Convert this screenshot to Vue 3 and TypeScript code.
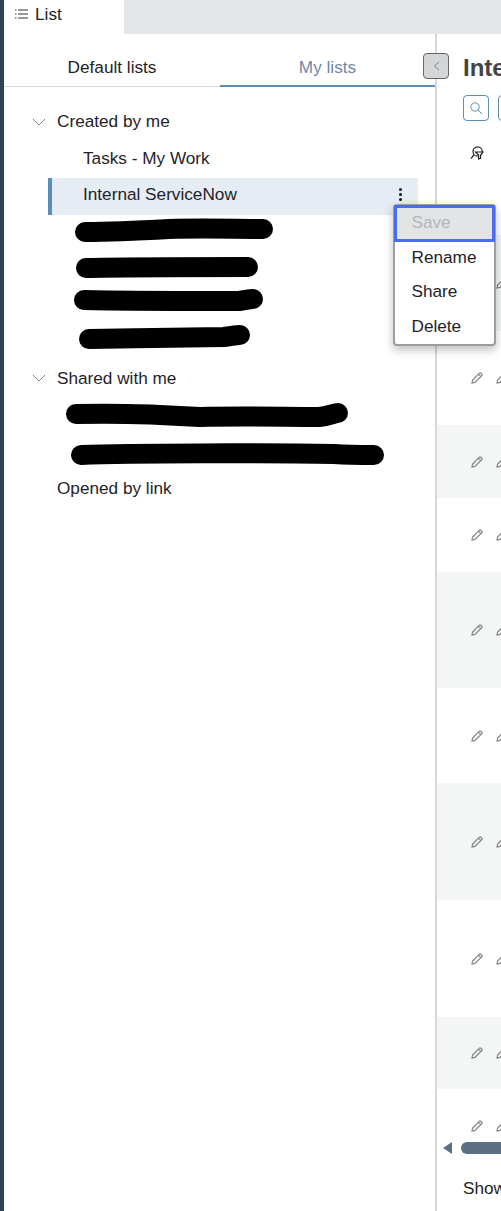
<template>
  <div class="page">
    <div class="rail"></div>
    <div class="main">
      <div class="tabbar">
        <div class="tab">
          <svg class="tab-icon" width="14" height="10" viewBox="0 0 14 10">
            <path d="M0 1h1.5M0 5h1.5M0 9h1.5M3 1h10M3 5h10M3 9h10" stroke="#333" stroke-width="1" fill="none" />
          </svg>
          <span>List</span>
        </div>
      </div>
      <div class="body">
        <aside class="side">
          <div class="switch">
            <div class="switch-item">Default lists</div>
            <div class="switch-item active">My lists</div>
          </div>
          <div class="tree">
            <div class="group">
              <svg class="chev" width="14" height="8" viewBox="0 0 14 8"><path d="M1 1l6 6 6-6" /></svg>
              <span class="nudge">Created by me</span>
            </div>
            <div class="item">Tasks - My Work</div>
            <div class="item selected">
              <span>Internal ServiceNow</span>
              <span class="dots"><i></i><i></i><i></i></span>
            </div>
            <!-- hand-drawn redaction strokes, y is relative to each block -->
            <svg class="scribbles" width="400" height="146" viewBox="0 0 400 146">
              <path v-for="d in createdScribbles" :key="d" :d="d" />
            </svg>
            <div class="group">
              <svg class="chev" width="14" height="8" viewBox="0 0 14 8"><path d="M1 1l6 6 6-6" /></svg>
              <span>Shared with me</span>
            </div>
            <svg class="scribbles" width="400" height="76" viewBox="0 0 400 76">
              <path v-for="d in sharedScribbles" :key="d" :d="d" />
            </svg>
            <div class="group link">Opened by link</div>
          </div>
        </aside>
        <section class="content">
          <h1>Internal ServiceNow</h1>
          <div class="tools">
            <button class="tool">
              <svg width="14" height="14" viewBox="0 0 14 14" fill="none" stroke="#5b8db8" stroke-width="1"><circle cx="6" cy="6" r="4.2" /><path d="M9 9l4 4" /></svg>
            </button>
            <button class="tool"></button>
          </div>
          <div class="head-icon">
            <svg width="14" height="14" viewBox="0 0 14 14" fill="none" stroke="#222" stroke-width="1.2"><circle cx="7.6" cy="5.4" r="4.6" /><path d="M4 8.6L1 12.6" /><path d="M5.6 6h7.4L10.6 9v3.4L8.6 13V9z" fill="#fff" /></svg>
          </div>
          <div class="rows">
            <div v-for="(r, i) in rows" :key="i" class="row" :class="{ alt: i % 2 === 0 }" :style="{ height: r + 'px' }">
              <svg class="pencil" width="12" height="12" viewBox="0 0 12 12"><path d="M1 11l.6-3L8.4 1.2a1 1 0 0 1 1.4 0l1 1a1 1 0 0 1 0 1.4L4 10.4zM7.4 2.2l2.4 2.4" /></svg>
              <svg class="pencil" width="12" height="12" viewBox="0 0 12 12"><path d="M1 11l.6-3L8.4 1.2a1 1 0 0 1 1.4 0l1 1a1 1 0 0 1 0 1.4L4 10.4zM7.4 2.2l2.4 2.4" /></svg>
            </div>
          </div>
          <div class="hscroll">
            <span class="arrow"></span>
            <span class="thumb"></span>
          </div>
          <div class="footer">Showing</div>
        </section>
        <button class="collapse">
          <svg width="7" height="10" viewBox="0 0 7 10" fill="none" stroke="#808080" stroke-width="1"><path d="M6 1L1.5 5 6 9" /></svg>
        </button>
        <div class="menu">
          <div class="menu-item disabled">Save</div>
          <div class="menu-item">Rename</div>
          <div class="menu-item">Share</div>
          <div class="menu-item">Delete</div>
        </div>
      </div>
    </div>
  </div>
</template>

<script setup lang="ts">
// block starts at y=215 in the page, x starts at 4 (after the rail)
const createdScribbles = [
  'M81 17 C 110 17, 130 16, 165 14 C 200 13, 230 14, 259 14',
  'M82 53 C 120 52, 160 52, 244 52',
  'M80 85 C 120 86, 180 86, 235 86 C 242 85, 246 84, 249 84',
  'M85 124 C 130 123, 180 123, 220 122 C 228 121, 232 120, 236 120',
]
// block starts at y=395
const sharedScribbles = [
  'M72 19 C 110 18, 150 19, 196 22 C 240 21, 280 22, 315 22 C 325 21, 330 18, 334 18',
  'M77 60 C 130 58, 260 58, 330 59 C 345 60, 355 60, 370 60',
]
// striped table rows, first one starts at y=235
const rows = [96, 94, 73, 74, 116, 95, 117, 117, 72, 74]
</script>

<style>
html, body { margin: 0; background: #fff; overflow: hidden; }
</style>

<style scoped>
.page { display: flex; width: 501px; height: 1211px; font-family: "Liberation Sans", Arial, sans-serif; font-size: 17.2px; color: #1f2328; overflow: hidden; }
.rail { width: 4px; flex: none; background: #2a4459; }
.main { flex: 1; min-width: 0; display: flex; flex-direction: column; }
.tabbar { height: 34px; flex: none; background: #e4e5e7; display: flex; }
.tab { width: 120px; background: #fff; display: flex; align-items: center; gap: 6px; padding-left: 11px; box-sizing: border-box; padding-bottom: 6px; color: #222; }
.tab-icon { flex: none; }
.body { position: relative; flex: 1; display: flex; min-height: 0; }
.side { width: 431px; flex: none; border-right: 2px solid #d6d7d9; }
.switch { display: flex; height: 52px; border-bottom: 1px solid #d8d9db; }
.switch-item { width: 216px; text-align: center; line-height: 67px; height: 52px; box-sizing: border-box; }
.switch-item.active { color: #6f86a8; border-bottom: 2px solid #5b8db8; margin-bottom: -1px; height: 53px; width: 215px; }
.tree { padding-top: 18px; }
.group { display: flex; align-items: center; gap: 11px; height: 34px; padding-left: 28px; }
.nudge { margin-bottom: 2px; }
.chev { fill: none; stroke: #888; stroke-width: 1; flex: none; }
.item { margin-left: 44px; margin-right: 17px; height: 39px; display: flex; align-items: center; padding-left: 35px; justify-content: space-between; box-sizing: border-box; }
.item.selected { height: 37px; background: #e5ecf3; border-left: 4px solid #5b8db8; padding-left: 31px; padding-right: 16px; padding-bottom: 4px; }
.dots { display: flex; flex-direction: column; gap: 2px; }
.dots i { width: 3px; height: 3px; border-radius: 50%; background: #111; display: block; }
.scribbles { display: block; fill: none; stroke: #000; stroke-width: 20; stroke-linecap: round; overflow: visible; }
.group.link { padding-left: 53px; }
.content { flex: 1; min-width: 0; overflow: hidden; padding-left: 26px; display: flex; flex-direction: column; position: relative; }
h1 { margin: 0; font-size: 24px; line-height: 28px; padding-top: 20px; color: #444; white-space: nowrap; }
.tools { display: flex; gap: 9px; margin-top: 13px; flex: none; }
.tool { width: 26px; height: 26px; box-sizing: border-box; border: 1px solid #5b8db8; border-radius: 4px; background: #fff; padding: 0; display: flex; align-items: center; justify-content: center; flex: none; }
.head-icon { height: 20px; margin-top: 23px; padding-left: 7px; flex: none; }
.rows { margin-left: -26px; margin-top: 71px; flex: none; }
.row { display: flex; align-items: center; gap: 13px; padding-left: 34px; box-sizing: border-box; }
.row.alt { background: #f4f5f5; }
.pencil { fill: none; stroke: #808285; stroke-width: 1.2; flex: none; }
.hscroll { position: absolute; left: 6px; right: 0; top: 1107px; height: 14px; display: flex; align-items: center; }
.arrow { width: 0; height: 0; border-top: 6px solid transparent; border-bottom: 6px solid transparent; border-right: 9px solid #5a6f82; }
.thumb { margin-left: 9px; flex: 1; height: 12px; border-radius: 6px 0 0 6px; background: #5a6f82; }
.footer { position: absolute; left: 26px; top: 1144px; white-space: nowrap; }
.collapse { position: absolute; left: 419px; top: 19px; width: 26px; height: 26px; box-sizing: border-box; background: #d4d5d7; border: 1px solid #666; border-radius: 4px; padding: 0; display: flex; align-items: center; justify-content: center; }
.menu { position: absolute; left: 388.5px; top: 170px; width: 103px; box-sizing: border-box; background: #fff; border: 2px solid #9a9da1; border-radius: 4px; box-shadow: 0 4px 10px rgba(0,0,0,.25); }
.menu-item { height: 34.5px; line-height: 32px; padding-left: 17px; box-sizing: border-box; }
.menu-item.disabled { color: #b4b6b9; background: #e2e4e6; outline: 3px solid #4a6cf0; outline-offset: -2px; }
</style>
